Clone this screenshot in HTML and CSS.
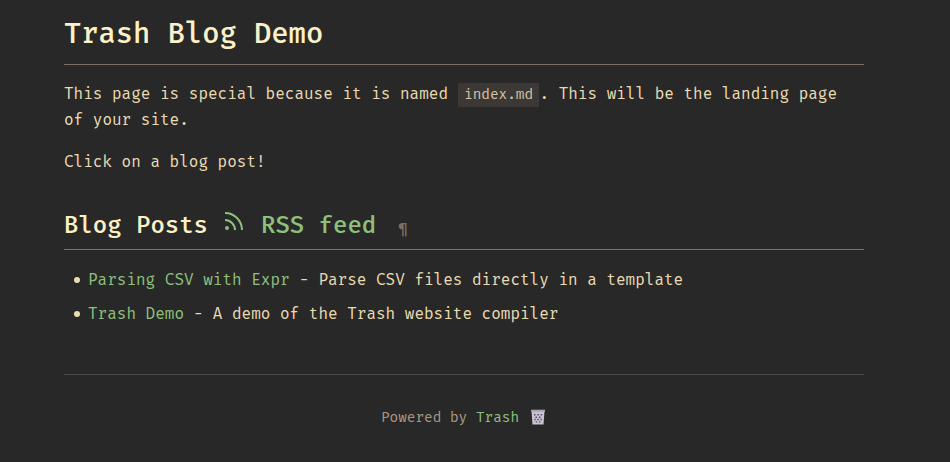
FILE: index.html
```html
<!DOCTYPE html>
<html lang="en">
<head>
<meta charset="utf-8">
<title>Trash Blog Demo</title>
<link rel="stylesheet" href="styles.css">
</head>
<body>
<main>
<h1>Trash Blog Demo</h1>
<p>This page is special because it is named <code>index.md</code>. This will be the landing page of your site.</p>
<p>Click on a blog post!</p>
<h2><span>Blog Posts</span><a class="feed" href="#"><svg class="rss" viewBox="0 0 24 24"><path d="M3 4a17 17 0 0 1 17 17M3 11a10 10 0 0 1 10 10"/><circle cx="5" cy="19" r="1"/></svg>RSS feed</a><a class="anchor" href="#">¶</a></h2>
<ul>
<li><a href="#">Parsing CSV with Expr</a> - Parse CSV files directly in a template</li>
<li><a href="#">Trash Demo</a> - A demo of the Trash website compiler</li>
</ul>
</main>
<footer><span>Powered by <a href="#">Trash</a></span><svg class="bin" viewBox="0 0 16 16"><path class="body" d="M1.5 2h13l-1 13.5h-11z"/><path class="mesh" d="M4 5h1.5v1.5H4zM7.3 5h1.5v1.5H7.3zM10.6 5h1.5v1.5h-1.5zM5.5 7.4H7v1.5H5.5zM9 7.4h1.5v1.5H9zM4.3 9.8h1.4v1.5H4.3zM7.3 9.8h1.5v1.5H7.3zM10.4 9.8h1.4v1.5h-1.4zM5.7 12.2h1.4v1.3H5.7zM9 12.2h1.4v1.3H9z"/><path class="rim" d="M1 .7h14v2H1z"/></svg></footer>
</body>
</html>
```
FILE: styles.css
```css
body {
  box-sizing: border-box;
  width: 800px;
  margin: 0 0 0 64px;
  background: #282828;
  color: #ebdbb2;
  font: 16px/26px "Fira Mono", "Fira Code", "DejaVu Sans Mono", monospace;
  overflow: hidden;
}

a {
  color: #8ec07c;
  text-decoration: none;
}

h1,
h2 {
  box-sizing: border-box;
  color: #fbf1c7;
  font-weight: 500;
}

h1 {
  height: 65px;
  margin: 0 0 16px;
  padding-top: 16px;
  border-bottom: 1px solid #7c6f64;
  font-size: 28.8px;
  line-height: 36px;
}

p {
  margin: 0 0 16px;
}

code {
  padding: 3px 6.4px 4px;
  background: #3c3836;
  color: #d5c4a1;
  font-family: inherit;
  font-size: 14.4px;
  line-height: 1;
}

h2 {
  display: flex;
  height: 46px;
  margin: 29px 0 17px;
  border-bottom: 1px solid #7c6f64;
  font-size: 24px;
  line-height: 43px;
}

.feed {
  display: flex;
  margin-left: 14px;
}

.rss {
  width: 24px;
  height: 24px;
  margin: 5px 15px 0 0;
  fill: none;
  stroke: currentColor;
  stroke-width: 2;
}

.rss circle {
  fill: currentColor;
}

.anchor {
  margin: 3px 0 0 22px;
  color: #7c6f64;
  font-size: 14.4px;
}

ul {
  margin: 0;
  padding: 0 0 0 8px;
  list-style: none;
}

li {
  display: flex;
  margin-bottom: 8px;
  white-space: pre;
}

li::before {
  content: "";
  width: 6px;
  height: 6px;
  margin: 10px 8px 0 2px;
  border-radius: 50%;
  background: #ebdbb2;
}

footer {
  display: flex;
  justify-content: center;
  align-items: center;
  height: 86px;
  margin-top: 47px;
  padding-right: 1px;
  border-top: 1px solid #504945;
  color: #a89984;
  font-size: 14.4px;
}

.bin {
  width: 16px;
  height: 16px;
  margin: 0 0 2px 11px;
}

.body {
  fill: #c9c2d2;
}

.mesh {
  fill: #55505e;
}

.rim {
  fill: #aaa3b4;
}
```
